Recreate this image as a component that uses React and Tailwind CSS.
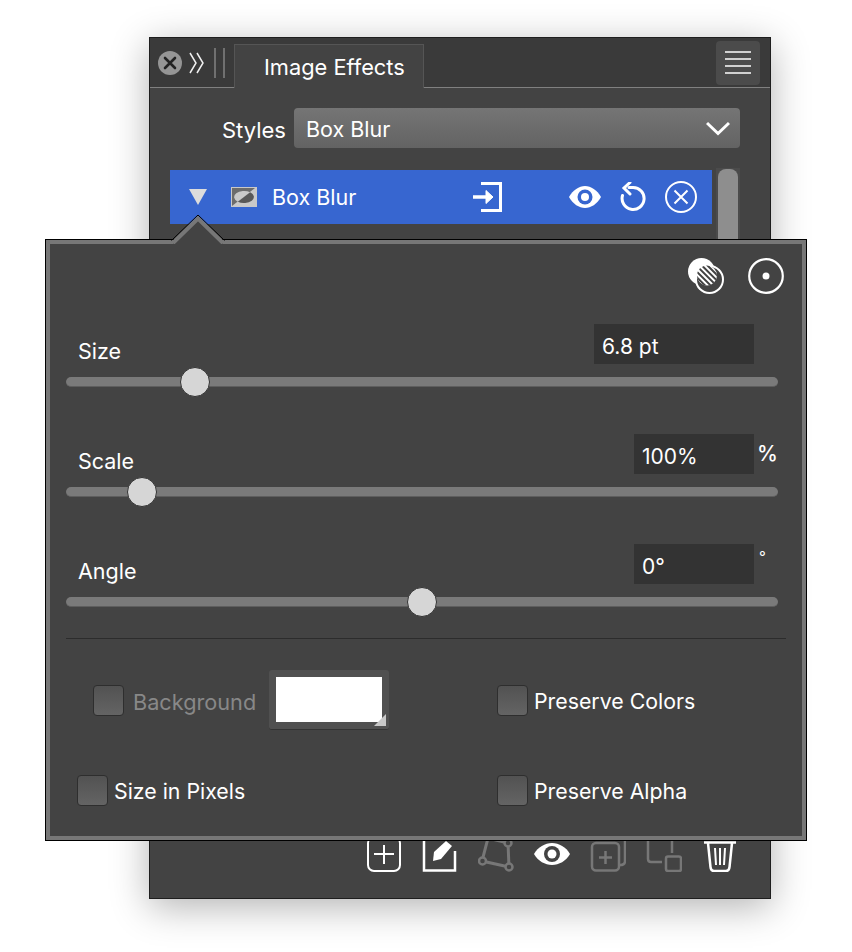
// App.jsx
import {useId} from "react";

const font = "font-['Inter','Roboto',sans-serif]";

const params = [
	{label: "Size", value: "6.8 pt", unit: "", inputClass: "w-[160px]", unitClass: "", thumb: 129},
	{label: "Scale", value: "100%", unit: "%", inputClass: "w-[120px]", unitClass: "text-[21px] font-medium leading-[40px]", thumb: 76},
	{label: "Angle", value: "0°", unit: "°", inputClass: "w-[120px]", unitClass: "text-[15px] leading-[26px] pl-[5px]", thumb: 356},
];

const Close = () => (
	<svg width="24" height="24" viewBox="0 0 24 24">
		<circle cx="12" cy="12" r="12" fill="#959595"/>
		<path d="M7 7 17 17M17 7 7 17" stroke="#222" strokeWidth="2.6" strokeLinecap="round"/>
	</svg>
);

const Chevrons = () => (
	<svg width="15" height="22" viewBox="0 0 15 22" fill="none" stroke="#f0f0f0" strokeWidth="1.5">
		<path d="M1 1 7 11 1 21M8 1 14 11 8 21"/>
	</svg>
);

const Grip = () => (
	<div className="flex gap-[7px] h-[30px]">
		<div className="w-[2px] bg-[#707070]"/>
		<div className="w-[2px] bg-[#707070]"/>
	</div>
);

const EffectThumb = () => (
	<svg width="26" height="20" viewBox="0 0 26 20">
		<rect width="26" height="20" fill="#c9c9c9"/>
		<path d="M1 1H24L1 19Z" fill="#6c6c6c"/>
		<path d="M6.850 14.730A10 6 0 0 1 19.150 5.270Z" fill="#c9c9c9"/>
		<path d="M6.850 14.730A10 6 0 0 0 19.150 5.270Z" fill="#585858"/>
	</svg>
);

const EnterIcon = () => (
	<svg width="30" height="30" viewBox="0 0 30 30" fill="none" stroke="white" strokeWidth="3">
		<path d="M8 1.500H27.500V28.500H8"/>
		<path d="M0 15H15" strokeWidth="3.500"/>
		<path d="M13 8.500 20 15 13 21.500Z" fill="white" strokeWidth="1"/>
	</svg>
);

const Eye = ({hole = "#3766d0"}) => (
	<svg width="32" height="24" viewBox="0 0 32 24">
		<path d="M0 12C4 5 10 1 16 1S28 5 32 12C28 19 22 23 16 23S4 19 0 12Z" fill="white"/>
		<circle cx="16" cy="12" r="7.500" fill={hole}/>
		<circle cx="16" cy="12" r="4" fill="white"/>
	</svg>
);

const ResetIcon = () => (
	<svg width="26" height="30" viewBox="0 0 26 30" fill="none" stroke="white" strokeWidth="3">
		<path d="M9 5.500H13A11 11 0 1 1 2.500 13.500" strokeLinecap="round"/>
		<path d="M10 0.500 4 6 10 12" strokeLinecap="round"/>
	</svg>
);

const CircleX = () => (
	<svg width="32" height="32" viewBox="0 0 32 32" fill="none" stroke="white" strokeWidth="2">
		<circle cx="16" cy="16" r="15"/>
		<path d="M9.500 9.500 22.500 22.500M22.500 9.500 9.500 22.500"/>
	</svg>
);

const BlendIcon = () => {
	const id = useId();
	return (
		<svg width="36" height="36" viewBox="0 0 36 36" fill="none">
			<defs>
				<clipPath id={id}>
					<circle cx="19" cy="17.500" r="10"/>
				</clipPath>
			</defs>
			<circle cx="13.500" cy="13.500" r="13.500" fill="white"/>
			<circle cx="21.500" cy="21.500" r="13.500" fill="#434343" stroke="white" strokeWidth="2"/>
			<g clipPath={`url(#${id})`}>
				<rect x="8" y="6" width="22" height="22" fill="white"/>
				<path d="M-16 0 20 36M-10.400 0 25.600 36M-4.800 0 31.200 36M0.800 0 36.800 36M6.400 0 42.400 36M12 0 48 36M17.600 0 53.600 36" stroke="#434343" strokeWidth="2"/>
			</g>
		</svg>
	);
};

const TargetIcon = () => (
	<svg width="36" height="36" viewBox="0 0 36 36" fill="none">
		<circle cx="18" cy="18" r="16.800" stroke="white" strokeWidth="2.200"/>
		<circle cx="18" cy="18" r="3.500" fill="white"/>
	</svg>
);

const Slider = ({thumb}) => (
	<div className="relative h-[10px] rounded-full bg-[#7a7a7a] border-b border-[#5e5e5e] ml-[16px] mr-[24px]">
		<div className="absolute top-[-10px] w-[30px] h-[30px] -translate-x-1/2 rounded-full bg-[#d6d6d6] border border-[#333]"
		     style={{left: thumb}}/>
	</div>
);

const Param = ({label, value, unit, inputClass, unitClass, thumb}) => (
	<div className="mb-[47px]">
		<div className="flex items-end justify-between pl-[28px] mb-[13px]">
			<span className="text-[21.500px] leading-[26px] text-white">{label}</span>
			<div className="flex h-[40px]">
				<div className={`${inputClass} h-[40px] bg-[#333] pl-[8px] text-[21px] leading-[45px] text-white`}>{value}</div>
				<div className={`w-[48px] pl-[3px] text-white ${unitClass}`}>{unit}</div>
			</div>
		</div>
		<Slider thumb={thumb}/>
	</div>
);

const Check = ({label, dim}) => (
	<div className="flex items-center gap-[6px]">
		<div className="w-[31px] h-[31px] rounded-[4px] border border-[#2e2e2e] bg-gradient-to-b from-[#525252] to-[#646464]"/>
		<span className={dim ? "ml-[3px] mt-[3px] text-[21.700px] leading-[30px] text-[#888]" : "mt-[2px] text-[21.300px] leading-[30px] text-white"}>{label}</span>
	</div>
);

const Swatch = () => (
	<div className="relative w-[120px] h-[60px] ml-[13px] p-[7px] rounded-[3px] bg-[#505050] border-b border-[#333]">
		<div className="h-[45px] w-[106px] bg-white"/>
		<svg className="absolute right-[3px] bottom-[3px]" width="12" height="12" viewBox="0 0 12 12">
			<path d="M12 0V12H0Z" fill="#c8c8c8"/>
		</svg>
	</div>
);

const Popover = () => (
	<div className="absolute left-[-104px] top-[202px] z-10 w-[760px] h-[600px] bg-[#434343] border-4 border-[#777] outline outline-1 outline-black">
		{/* arrow pointing at the selected effect */}
		<svg className="absolute left-[121px] top-[-29px]" width="54" height="29" viewBox="0 0 54 29">
			<path d="M2 29 27 4 52 29Z" fill="#434343"/>
			<path d="M0 25H1L27 0 53 25H54" fill="none" stroke="black" strokeWidth="1"/>
			<path d="M2 28 27 3.500 52 28" fill="none" stroke="#777" strokeWidth="4"/>
		</svg>
		<div className="flex justify-end gap-[24px] pt-[14px] pr-[18px] mb-[30px]">
			<BlendIcon/>
			<TargetIcon/>
		</div>
		{params.map((param) => (
			<Param key={param.label} {...param}/>
		))}
		<div className="h-px bg-[#2c2c2c] ml-[16px] mr-[16px] mt-[-16px] mb-[31px]"/>
		<div className="grid grid-cols-[447px_1fr] grid-rows-[60px_30px] gap-y-[45px]">
			<div className="flex items-center pl-[43px]">
				<Check label="Background" dim/>
				<Swatch/>
			</div>
			<div className="flex items-center">
				<Check label="Preserve Colors"/>
			</div>
			<div className="flex items-center pl-[27px]">
				<Check label="Size in Pixels"/>
			</div>
			<div className="flex items-center">
				<Check label="Preserve Alpha"/>
			</div>
		</div>
	</div>
);

const ToolIcon = ({children}) => (
	<svg width="36" height="36" viewBox="0 0 36 36" fill="none">{children}</svg>
);

const Toolbar = () => (
	<div className="mt-auto flex gap-[20px] pl-[216px] pb-[26px]">
		<ToolIcon>
			<rect x="2" y="1" width="32" height="34" rx="6" stroke="white" strokeWidth="2"/>
			<path d="M18 9V28M8 18H28" stroke="white" strokeWidth="2"/>
		</ToolIcon>
		<ToolIcon>
			<path d="M2 1V34.500H33V15" stroke="white" strokeWidth="2.500"/>
			<path d="M11 25 12 16 24 5 30 10 19 23Z" fill="white"/>
		</ToolIcon>
		<ToolIcon>
			<path d="M10 2 30 7 31 31 4 25Z" stroke="#777" strokeWidth="3"/>
			<circle cx="4.500" cy="25" r="3.500" fill="#434343" stroke="#777" strokeWidth="2.500"/>
			<circle cx="31" cy="31" r="3.500" fill="#434343" stroke="#777" strokeWidth="2.500"/>
			<circle cx="30" cy="7" r="3.500" fill="#434343" stroke="#777" strokeWidth="2.500"/>
		</ToolIcon>
		<ToolIcon>
			<path d="M0 18C4 11 11 7 18 7S32 11 36 18C32 25 25 29 18 29S4 25 0 18Z" fill="white"/>
			<circle cx="18" cy="18" r="8" fill="#434343"/>
			<circle cx="18" cy="18" r="4.500" fill="white"/>
		</ToolIcon>
		<ToolIcon>
			<rect x="2" y="7" width="27" height="27.500" rx="4" stroke="#777" strokeWidth="2.500"/>
			<path d="M15.500 15V28M9 21.500H22" stroke="#777" strokeWidth="2.500"/>
			<path d="M35 3V25C35 27 34 29 30 29" stroke="#777" strokeWidth="2.500"/>
		</ToolIcon>
		<ToolIcon>
			<path d="M2 0V23C2 25 3 26 5 26H16" stroke="#777" strokeWidth="2.500"/>
			<path d="M26 0V17" stroke="#777" strokeWidth="2.500"/>
			<rect x="20" y="20.500" width="15" height="14.500" rx="2" stroke="#777" strokeWidth="2.500"/>
		</ToolIcon>
		<ToolIcon>
			<path d="M2 6.500H34" stroke="white" strokeWidth="2.500"/>
			<path d="M6 7 8.500 31C8.700 33.500 10 35 12 35H24C26 35 27.300 33.500 27.500 31L30 7" stroke="white" strokeWidth="2.500"/>
			<path d="M13 12 14 29M18 12V29M23 12 22 29" stroke="white" strokeWidth="2"/>
		</ToolIcon>
	</div>
);

const App = () => {
	return (
		<div className={`${font} w-[852px] h-[952px] bg-white pl-[149px] pt-[37px] overflow-hidden`}>
			<div className="relative flex flex-col w-[622px] h-[862px] bg-[#434343] border border-[#1e1e1e] shadow-[0_8px_36px_rgba(0,0,0,0.3)]">
				{/* tab bar */}
				<div className="flex items-center h-[50px] shrink-0 bg-[#3a3a3a] border-b border-[#808080] pl-[8px] pr-[10px]">
					<Close/>
					<div className="ml-[7px]"><Chevrons/></div>
					<div className="ml-[10px]"><Grip/></div>
					<div className="self-end ml-[9px] w-[190px] h-[44px] mb-[-1px] bg-[#434343] border border-b-0 border-[#555] pl-[29px] text-[21.800px] leading-[44px] text-white">
						Image Effects
					</div>
					<div className="ml-auto flex flex-col justify-center gap-[5px] w-[44px] h-[44px] rounded-[4px] bg-[#4b4b4b] px-[9px]">
						<div className="h-[2px] bg-[#d0d0d0]"/>
						<div className="h-[2px] bg-[#d0d0d0]"/>
						<div className="h-[2px] bg-[#d0d0d0]"/>
						<div className="h-[2px] bg-[#d0d0d0]"/>
					</div>
				</div>
				{/* styles select */}
				<div className="flex items-center mt-[20px] pl-[72px] pr-[30px]">
					<span className="w-[72px] text-[22px] leading-[32px] mt-[3px] text-white">Styles</span>
					<div className="flex items-center justify-between flex-1 h-[40px] rounded-[4px] bg-gradient-to-b from-[#757575] to-[#636363] pl-[12px] pr-[10px]">
						<span className="text-[21.500px] leading-[32px] mt-[1px] text-white">Box Blur</span>
						<svg width="24" height="15" viewBox="0 0 24 15" fill="none" stroke="white" strokeWidth="3">
							<path d="M1 2 12 12.500 23 2"/>
						</svg>
					</div>
				</div>
				{/* effect list */}
				<div className="flex mt-[20px] pl-[20px] pr-[30px]">
					<div className="flex items-center flex-1 h-[54px] mt-[2px] bg-[#3766d0] pl-[19px] text-white">
						<svg width="18" height="16" viewBox="0 0 18 16"><path d="M0 0H18L9 16Z" fill="#dcdcdc"/></svg>
						<div className="ml-[24px]"><EffectThumb/></div>
						<span className="ml-[15px] w-[84px] text-[21.500px] whitespace-nowrap">Box Blur</span>
						<div className="ml-[117px]"><EnterIcon/></div>
						<div className="ml-[66px]"><Eye/></div>
						<div className="ml-[19px]"><ResetIcon/></div>
						<div className="ml-[19px]"><CircleX/></div>
					</div>
					<div className="ml-[4px] w-[24px] h-[72px] bg-[#4b4b4b] px-[2px] pt-[1px]">
						<div className="h-full rounded-t-[8px] bg-[#8e8e8e]"/>
					</div>
				</div>
				<Toolbar/>
				<Popover/>
			</div>
		</div>
	);
};

export default App;
